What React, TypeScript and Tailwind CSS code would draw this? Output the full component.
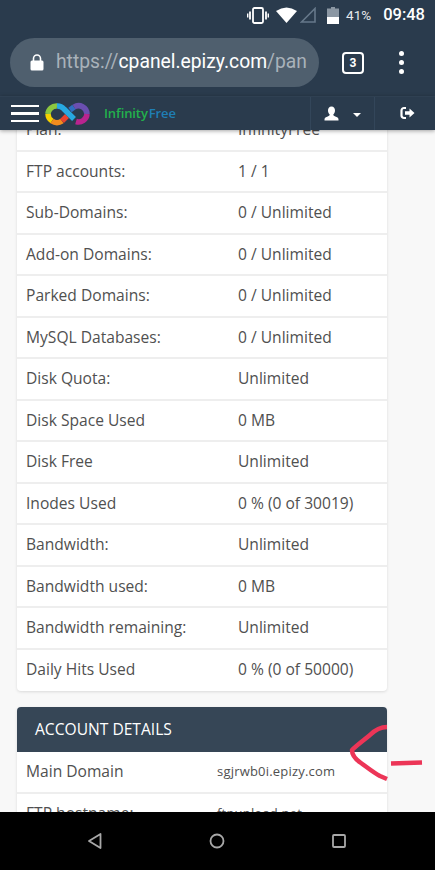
import React from "react";

const usage: [string, string][] = [
  ["Plan:", "InfinityFree"],
  ["FTP accounts:", "1 / 1"],
  ["Sub-Domains:", "0 / Unlimited"],
  ["Add-on Domains:", "0 / Unlimited"],
  ["Parked Domains:", "0 / Unlimited"],
  ["MySQL Databases:", "0 / Unlimited"],
  ["Disk Quota:", "Unlimited"],
  ["Disk Space Used", "0 MB"],
  ["Disk Free", "Unlimited"],
  ["Inodes Used", "0 % (0 of 30019)"],
  ["Bandwidth:", "Unlimited"],
  ["Bandwidth used:", "0 MB"],
  ["Bandwidth remaining:", "Unlimited"],
  ["Daily Hits Used", "0 % (0 of 50000)"],
];

function Row({ label, value, last, small }: { label: string; value: string; last?: boolean; small?: boolean }) {
  return (
    <div className={`flex items-center h-[41.5px] pl-[9px] border-b-2 ${last ? "border-transparent" : "border-[#eeeeee]"}`}>
      <div className={`${small ? "w-[191px]" : "w-[212px]"} shrink-0`}>{label}</div>
      <div className={small ? "text-[13px] tracking-[0.2px]" : ""}>{value}</div>
    </div>
  );
}

function Logo() {
  return (
    <svg width="48" height="26" viewBox="0 0 48 26" className="shrink-0">
      <g fill="none" strokeWidth="5.5">
        <path d="M14 5 A8.500 8.500 0 0 0 5 13" stroke="#8cc63f" />
        <path d="M5 13 A8.500 8.500 0 0 0 9 20" stroke="#f5d000" />
        <path d="M9 20 A8.500 8.500 0 0 0 19 20" stroke="#f28c1e" />
        <path d="M19 20 L24 15" stroke="#e8432e" />
        <path d="M14 5 A9 9 0 0 1 21 8 L31 18" stroke="#27a9e1" />
        <path d="M27 9 L31 6" stroke="#2f6fc0" />
        <path d="M31 6 A8.500 8.500 0 0 1 44 13" stroke="#6a4fb0" />
        <path d="M44 13 A8.500 8.500 0 0 1 33 20.500" stroke="#b8248f" />
      </g>
    </svg>
  );
}

export default function App() {
  return (
    <div
      className="flex flex-col w-[435px] h-[870px] overflow-hidden relative bg-[#f8f8f8] text-[#505050] text-[15.6px]"
      style={{ fontFamily: '"Open Sans", sans-serif' }}
    >
      {/* Android + browser chrome */}
      <div className="bg-[#2a3b4d] h-[96px] shrink-0 flex flex-col relative z-10">
        <div className="h-[28px] mt-[1px] flex items-center justify-end pr-[10px] text-white" style={{ fontFamily: "Roboto, sans-serif" }}>
          <svg width="22" height="17" viewBox="0 0 22 17" className="mr-[7px]">
            <rect x="6" y="1" width="10" height="15" rx="1.500" fill="none" stroke="white" strokeWidth="1.800" />
            <path d="M3 4.500v8M19 4.500v8" stroke="white" strokeWidth="1.800" />
            <path d="M0.700 6.500v4M21.300 6.500v4" stroke="white" strokeWidth="1.400" />
          </svg>
          <svg width="21" height="16" viewBox="0 0 21 16" className="mr-[3px]">
            <path d="M0 4 Q10.500 -3 21 4 L10.500 16 Z" fill="white" />
          </svg>
          <svg width="16" height="16" viewBox="0 0 16 16" className="mr-[11px]">
            <path d="M1.500 15 L15 1.500 V15 Z" fill="none" stroke="#66788a" strokeWidth="1.600" />
          </svg>
          <svg width="12" height="17" viewBox="0 0 12 17" className="mr-[7px]">
            <path d="M4 0h4v1.500h4V17H0V1.500h4z" fill="#8b97a3" />
            <rect x="0" y="10" width="12" height="7" fill="white" />
          </svg>
          <span className="text-[13.500px] text-[#e6e9ec] mr-[12px]">41%</span>
          <span className="text-[16.500px] font-medium">09:48</span>
        </div>
        <div className="flex items-center mt-[9px] pl-[10px]">
          <div className="w-[309px] h-[49px] rounded-full bg-[#4f5f6e] flex items-center pl-[20px] shrink-0 overflow-hidden" style={{ fontFamily: "Roboto, sans-serif" }}>
            <svg width="14" height="17" viewBox="0 0 14 17" className="shrink-0 mr-[12px]">
              <path d="M3.500 7V4.500a3.500 3.500 0 0 1 7 0V7" fill="none" stroke="white" strokeWidth="1.600" />
              <rect x="0.500" y="6.500" width="13" height="10" rx="1.500" fill="white" />
            </svg>
            <div className="w-[251px] overflow-hidden whitespace-nowrap text-[19.300px] text-[#a9b2ba]">
              https://<span className="text-white">cpanel.epizy.com</span>/panel
            </div>
          </div>
          <div className="ml-[23px] w-[22px] h-[22px] border-2 border-white rounded-[4px] flex items-center justify-center text-white text-[12px] font-bold" style={{ fontFamily: "Roboto, sans-serif" }}>
            3
          </div>
          <div className="ml-[35px] flex flex-col gap-[4px]">
            <span className="w-[5px] h-[5px] rounded-full bg-white" />
            <span className="w-[5px] h-[5px] rounded-full bg-white" />
            <span className="w-[5px] h-[5px] rounded-full bg-white" />
          </div>
        </div>
      </div>

      {/* Site navbar */}
      <div className="bg-[#2a3b4d] h-[34px] shrink-0 flex items-center relative z-10 shadow-[0_1px_4px_rgba(0,0,0,0.35)] border-t border-[#2f4052]">
        <div className="ml-[11px] w-[28px] flex flex-col gap-[5px] shrink-0">
          <span className="h-[2.500px] bg-white" />
          <span className="h-[2.500px] bg-white" />
          <span className="h-[2.500px] bg-white" />
        </div>
        <div className="ml-[4px]"><Logo /></div>
        <div className="ml-[13px] text-[13px] font-semibold tracking-[-0.1px]">
          <span className="text-[#22b14c]">Infinity</span>
          <span className="text-[#1f7fb5] ml-[1px]">Free</span>
        </div>
        <div className="ml-auto flex h-full">
          <div className="w-[65px] border-x border-[#33465a] flex items-center justify-center gap-[14px] pr-[1px]">
            <svg width="15" height="15" viewBox="0 0 15 15">
              <path d="M7.500 0.500C5.200 0.500 4 2.200 4 4.500c0 1.700.700 3.200 1.700 4 0 1-.500 1.300-2 2C2 11.200.500 11.700.500 13.500V14.500h14v-1c0-1.800-1.500-2.300-3.200-3-1.500-.700-2-1-2-2 1-.800 1.700-2.300 1.700-4C11 2.200 9.800.500 7.500.500z" fill="white" />
            </svg>
            <span className="w-0 h-0 border-x-[4px] border-x-transparent border-t-[4px] border-t-white mt-[3px]" />
          </div>
          <div className="w-[60px] flex items-center justify-center pb-[1px] pl-[4px]">
            <svg width="15" height="14" viewBox="0 0 15 14">
              <path d="M6 2H4a2.500 2.500 0 0 0-2.500 2.500v5A2.500 2.500 0 0 0 4 12h2" fill="none" stroke="white" strokeWidth="2.200" />
              <path d="M5 5.300h4.500V2.500L14.500 7l-5 4.500V8.700H5z" fill="white" />
            </svg>
          </div>
        </div>
      </div>

      {/* Page content, scrolled part-way */}
      <div className="flex-1 min-h-0 overflow-hidden px-[17px]">
        <div className="-mt-[20px] w-[370px]">
          <div className="bg-white rounded-[4px] shadow-[0_1px_3px_rgba(0,0,0,0.12)]">
            {usage.map(([l, v], i) => (
              <Row key={l} label={l} value={v} last={i === usage.length - 1} />
            ))}
          </div>
          <div className="mt-[16px] bg-white rounded-[4px] shadow-[0_1px_3px_rgba(0,0,0,0.12)] overflow-hidden">
            <div className="h-[45px] bg-[#364656] text-white flex items-center pl-[18px]">ACCOUNT DETAILS</div>
            <Row label="Main Domain" value="sgjrwb0i.epizy.com" small />
            <Row label="FTP hostname:" value="ftpupload.net" small />
          </div>
        </div>
      </div>

      {/* Android nav bar */}
      <div className="bg-black h-[58px] shrink-0 flex items-center relative z-10">
        <div className="w-[217px] flex justify-center">
          <svg width="16" height="18" viewBox="0 0 16 18" className="ml-[-27px]">
            <path d="M13.500 2 L2 9 L13.500 16 Z" fill="none" stroke="#a8a8a8" strokeWidth="1.800" strokeLinejoin="round" />
          </svg>
        </div>
        <svg width="16" height="16" viewBox="0 0 16 16" className="ml-[-8px]">
          <circle cx="8" cy="8" r="6.500" fill="none" stroke="#a8a8a8" strokeWidth="1.800" />
        </svg>
        <svg width="14" height="14" viewBox="0 0 14 14" className="ml-[107px]">
          <rect x="1" y="1" width="12" height="12" rx="1" fill="none" stroke="#a8a8a8" strokeWidth="1.800" />
        </svg>
      </div>

      {/* Hand-drawn red annotation */}
      <svg className="absolute left-0 top-0 z-20 pointer-events-none" width="435" height="870" viewBox="0 0 435 870">
        <path d="M387 727 C381 727 376 729 370 735 C364 740 357 745 352 750 C352 755 355 759 361 763 C368 768 374 773 380 776 L387 779" fill="none" stroke="#ec3557" strokeWidth="4.500" strokeLinejoin="round" />
        <path d="M391 763.500 L422 762.500" fill="none" stroke="#ec3557" strokeWidth="4.500" />
      </svg>
    </div>
  );
}
